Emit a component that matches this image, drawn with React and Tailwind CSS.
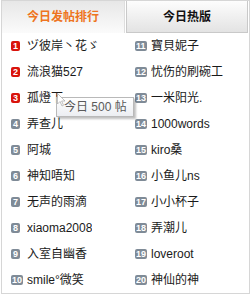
const left = [
  'ヅ彼岸丶花ゞ',
  '流浪猫527',
  '孤燈下',
  '弄查儿',
  '阿城',
  '神知唔知',
  '无声的雨滴',
  'xiaoma2008',
  '入室自幽香',
  'smile°微笑',
];

const right = [
  '寶貝妮子',
  '忧伤的刷碗工',
  '一米阳光.',
  '1000words',
  'kiro桑',
  '小鱼儿ns',
  '小小杯子',
  '弄潮儿',
  'loveroot',
  '神仙的神',
];

const Badge = ({ n }) => (
  <span
    className={`inline-flex h-[10px] min-w-[9px] items-center justify-center rounded-[2px] px-[1px] text-[9px] font-bold leading-none text-white ${
      n <= 3 ? 'bg-[#d9140c]' : 'bg-[#7f8b97]'
    }`}
    style={{ fontFamily: '"Liberation Sans", Arial, sans-serif' }}
  >
    {n}
  </span>
);

const Row = ({ n, name }) => (
  <li className="flex h-[26px] items-center">
    <span className="flex w-[16px] shrink-0 items-center">
      <Badge n={n} />
    </span>
    <span className="truncate text-[12px] text-[#1a1a1a]">{name}</span>
  </li>
);

const App = () => {
  return (
    <div
      className="relative ml-px h-[294px] w-[249px] border border-[#d6d6d6] bg-white"
      style={{ fontFamily: '"Liberation Sans", "Noto Sans CJK SC", sans-serif' }}
    >
      {/* Tabs */}
      <div className="flex h-[32px]">
        <div className="flex w-[123px] items-center justify-center border-r border-[#dedede] bg-linear-to-b from-[#e7e7e7] to-[#fbfbfb] text-[12px] font-bold text-[#ee7420]">
          今日发帖排行
        </div>
        <div className="ml-px flex w-[122px] items-center justify-center border border-t-0 border-[#c9c9c9] bg-linear-to-b from-[#fdfdfd] to-[#e3e3e3] text-[12px] font-bold text-[#111]">
          今日热版
        </div>
      </div>

      {/* Ranking list */}
      <div className="flex pl-[9px]">
        <ul className="w-[124px]">
          {left.map((name, i) => (
            <Row key={name} n={i + 1} name={name} />
          ))}
        </ul>
        <ul className="flex-1">
          {right.map((name, i) => (
            <Row key={name} n={i + 11} name={name} />
          ))}
        </ul>
      </div>

      {/* Tooltip */}
      <div className="absolute left-[54px] top-[96px] flex h-[20px] w-[78px] items-center border border-[#b9b9b9] bg-linear-to-b from-white to-[#eceef2] pl-[7px] text-[12px] text-[#5a5a5a] shadow-[2px_2px_2px_rgba(0,0,0,0.25)]">
        今日 500 帖
      </div>
      <svg className="absolute left-[55px] top-[92px]" width="10" height="14" viewBox="0 0 10 14">
        <path d="M0.5 0.5 L0.5 11 L3 8.5 L5 13 L6.5 12.3 L4.6 8 L8 8 Z" fill="white" stroke="#a8a8a8" strokeWidth="0.7" />
      </svg>
    </div>
  );
};

export default App;
